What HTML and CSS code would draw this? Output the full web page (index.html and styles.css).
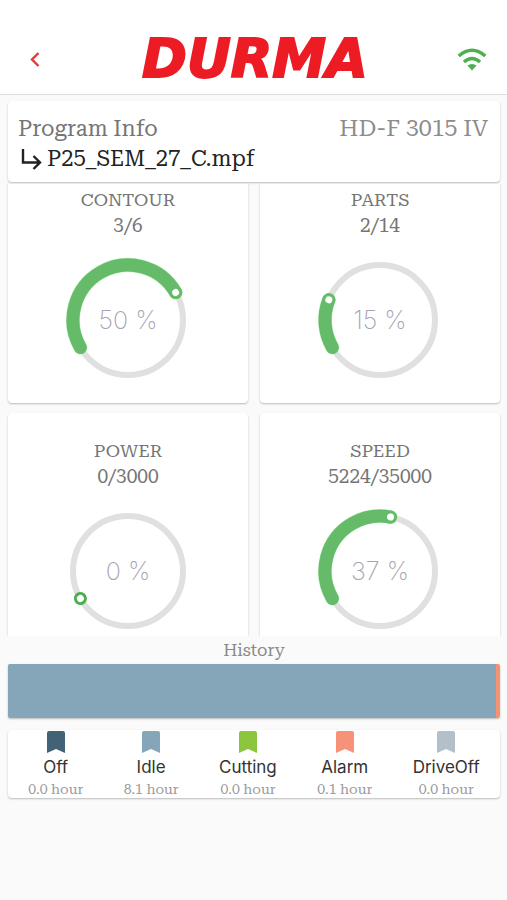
FILE: index.html
```html
<!DOCTYPE html>
<html lang="en">
<head>
<meta charset="utf-8">
<meta name="viewport" content="width=device-width, initial-scale=1">
<title>Durma</title>
<link rel="stylesheet" href="styles.css">
</head>
<body>
<header class="topbar">
  <button class="back" aria-label="Back"><svg width="24" height="24" viewBox="0 0 24 24"><path d="M15.500 6 9 12.500l6.500 6.500" fill="none" stroke="currentColor" stroke-width="2.400"/></svg></button>
  <div class="logo">DURMA</div>
  <svg class="wifi" width="30" height="24" viewBox="0 0 30 24"><g fill="none" stroke="currentColor" stroke-width="3.500"><path d="M1.700 9Q15-2.500 28.300 9"/><path d="M7 15Q15 8 23 15"/></g><path d="M10.500 18.500Q15 15.500 19.500 18.500L15 23.500Z" fill="currentColor"/></svg>
</header>
<main>
  <section class="card info">
    <div class="info-row"><h1>Program Info</h1><span class="machine">HD-F 3015 IV</span></div>
    <div class="program"><svg width="24" height="24" viewBox="0 0 24 24"><path d="M3 2v13.500h16M13.500 9l6.500 6.500-6.500 6.500" fill="none" stroke="currentColor" stroke-width="2.400"/></svg><span>P25_SEM_27_C.mpf</span></div>
  </section>

  <section class="scroller">
    <div class="gauges">
      <article class="card gauge">
        <h2>CONTOUR</h2><p>3/6</p>
        <div class="dial">
          <svg viewBox="0 0 130 130"><circle class="track" cx="65" cy="65" r="55"/><g transform="rotate(150 65 65)"><circle class="halo" cx="65" cy="65" r="55" pathLength="100" stroke-dasharray="50 100"/><circle class="value" cx="65" cy="65" r="55" pathLength="100" stroke-dasharray="50 100"/></g><circle class="knob" cx="65" cy="65" r="5" transform="rotate(-30 65 65) translate(55 0)"/></svg>
          <span>50 %</span>
        </div>
      </article>
      <article class="card gauge">
        <h2>PARTS</h2><p>2/14</p>
        <div class="dial">
          <svg viewBox="0 0 130 130"><circle class="track" cx="65" cy="65" r="55"/><g transform="rotate(150 65 65)"><circle class="halo" cx="65" cy="65" r="55" pathLength="100" stroke-dasharray="14.300 100"/><circle class="value" cx="65" cy="65" r="55" pathLength="100" stroke-dasharray="14.300 100"/></g><circle class="knob" cx="65" cy="65" r="5" transform="rotate(201.500 65 65) translate(55 0)"/></svg>
          <span>15 %</span>
        </div>
      </article>
      <article class="card gauge">
        <h2>POWER</h2><p>0/3000</p>
        <div class="dial">
          <svg viewBox="0 0 130 130"><circle class="track" cx="65" cy="65" r="55"/><circle class="knob" cx="65" cy="65" r="5" transform="rotate(150 65 65) translate(55 0)"/></svg>
          <span>0 %</span>
        </div>
      </article>
      <article class="card gauge">
        <h2>SPEED</h2><p>5224/35000</p>
        <div class="dial">
          <svg viewBox="0 0 130 130"><circle class="track" cx="65" cy="65" r="55"/><g transform="rotate(150 65 65)"><circle class="halo" cx="65" cy="65" r="55" pathLength="100" stroke-dasharray="36.400 100"/><circle class="value" cx="65" cy="65" r="55" pathLength="100" stroke-dasharray="36.400 100"/></g><circle class="knob" cx="65" cy="65" r="5" transform="rotate(281 65 65) translate(55 0)"/></svg>
          <span>37 %</span>
        </div>
      </article>
    </div>
  </section>

  <h2 class="history-title">History</h2>
  <div class="history"><i class="idle-bar"></i><i class="cut-bar"></i><i class="alarm-bar"></i></div>

  <ul class="card legend">
    <li class="off"><svg viewBox="0 0 18 22"><path d="M0 2Q0 0 2 0H16Q18 0 18 2V22L9 18 0 22Z"/></svg><b>Off</b><small>0.0 hour</small></li>
    <li class="idle"><svg viewBox="0 0 18 22"><path d="M0 2Q0 0 2 0H16Q18 0 18 2V22L9 18 0 22Z"/></svg><b>Idle</b><small>8.1 hour</small></li>
    <li class="cutting"><svg viewBox="0 0 18 22"><path d="M0 2Q0 0 2 0H16Q18 0 18 2V22L9 18 0 22Z"/></svg><b>Cutting</b><small>0.0 hour</small></li>
    <li class="alarm"><svg viewBox="0 0 18 22"><path d="M0 2Q0 0 2 0H16Q18 0 18 2V22L9 18 0 22Z"/></svg><b>Alarm</b><small>0.1 hour</small></li>
    <li class="driveoff"><svg viewBox="0 0 18 22"><path d="M0 2Q0 0 2 0H16Q18 0 18 2V22L9 18 0 22Z"/></svg><b>DriveOff</b><small>0.0 hour</small></li>
  </ul>
</main>
</body>
</html>
```
FILE: styles.css
```css
* { box-sizing: border-box; margin: 0; padding: 0; }
body {
  min-height: 100vh;
  background: #fafafa;
  color: #757575;
  font-family: "Roboto Slab", "Roboto Serif", "Noto Serif", "Liberation Serif", serif;
  font-variant-numeric: lining-nums;
}
h1, h2 { font-weight: 400; }

.topbar {
  display: grid;
  grid-template-columns: 30px 1fr 30px;
  align-items: center;
  padding: 24px 20px 0 23px;
  height: 95px;
  background: #fff;
  border-bottom: 1px solid #dedede;
}
.back { width: 24px; height: 24px; border: 0; background: none; color: #e53935; }
.back svg { display: block; }
.logo {
  color: #ed1c24;
  text-align: center;
  font: italic 700 54px/60px "DejaVu Sans", sans-serif;
  -webkit-text-stroke: 2px #ed1c24;
}
.wifi { color: #4caf50; }

main { padding: 6px 7px 0 8px; }
.card {
  background: #fff;
  border-radius: 4px;
  box-shadow: 0 1px 2px rgba(0, 0, 0, 0.26);
}

.info { padding: 13px 12px 8px 10px; }
.info-row { display: flex; justify-content: space-between; line-height: 30px; }
.info h1 { font-size: 22px; }
.machine { font-size: 23px; color: #8c8c8c; }
.program {
  display: flex;
  align-items: center;
  gap: 3px;
  padding-left: 2px;
  color: #222;
  font-size: 22px;
  line-height: 30px;
}

.scroller { height: 452px; margin: 2px -7px 0 -8px; padding: 0 7px 0 8px; overflow: hidden; }
.gauges { display: grid; grid-template-columns: 1fr 1fr; gap: 10px 12px; margin-top: -22px; }
.gauge { padding: 25px 0 18px; text-align: center; font-size: 19px; line-height: 26px; }
.gauge h2 { font-size: 18px; }
.dial { display: grid; place-items: center; margin-top: 16px; }
.dial > * { grid-area: 1 / 1; }
.dial svg { width: 130px; height: 130px; }
.dial span { color: #a8a4b2; font: 200 25px/32px Inter, sans-serif; }
.track, .halo, .value { fill: none; }
.track { stroke: #e0e0e0; stroke-width: 6; }
.halo { stroke: #c5f2c7; stroke-width: 14; stroke-linecap: round; }
.value { stroke: #66bb6a; stroke-width: 13; stroke-linecap: round; }
.knob { fill: #fff; stroke: #4caf50; stroke-width: 3; }
g + .knob { stroke: #66bb6a; }

.history-title { font-size: 17px; line-height: 28px; text-align: center; color: #8a8a8a; }
.history {
  display: flex;
  height: 54px;
  border-radius: 2px;
  overflow: hidden;
  box-shadow: 0 1px 2px rgba(0, 0, 0, 0.26);
}
.idle-bar { flex: 1; background: #85a5b8; }
.cut-bar { width: 1px; background: #a5a377; }
.alarm-bar { width: 4px; background: #f59272; }

.legend {
  display: flex;
  justify-content: space-around;
  margin-top: 12px;
  padding: 1px 0 0;
  list-style: none;
}
.legend li { display: flex; flex-direction: column; align-items: center; }
.legend svg { width: 18px; height: 22px; fill: currentColor; }
.legend b { color: #333; font: 400 17px/28px Inter, sans-serif; }
.legend small { color: #9a9a9a; font-size: 14px; line-height: 17px; }
.off { color: #426276; }
.idle { color: #85a5b8; }
.cutting { color: #8cc63f; }
.alarm { color: #f59278; }
.driveoff { color: #b3c0c9; }
```
